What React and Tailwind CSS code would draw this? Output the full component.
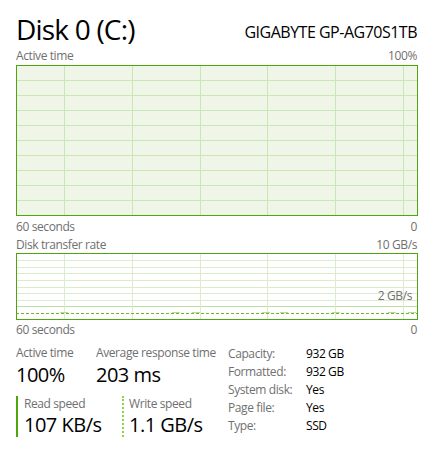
import React from 'react';

const font = { fontFamily: '"Open Sans", "Noto Sans", sans-serif' };

const vLines = [48, 116, 184, 251, 319, 387];

function ActiveChart() {
  const hLines = [15, 30, 45, 60, 75, 90, 105, 120, 135];
  return (
    <svg width="402" height="151" className="block">
      <rect x="0" y="0" width="402" height="151" fill="#eff6e8" />
      {hLines.map((y) => (
        <line key={y} x1="0" x2="402" y1={y + 0.5} y2={y + 0.5} stroke="#c9e6b3" strokeWidth="1" />
      ))}
      {vLines.map((x) => (
        <line key={x} x1={x + 0.5} x2={x + 0.5} y1="0" y2="151" stroke="#c9e6b3" strokeWidth="1" />
      ))}
      <rect x="0.5" y="0.5" width="401" height="150" fill="none" stroke="#4da60c" strokeWidth="1" />
    </svg>
  );
}

function TransferChart() {
  const hLines = [7, 14, 20, 27, 34, 40, 47];
  const bumps = [44, 156, 176, 246, 264, 316, 372, 392];
  return (
    <svg width="402" height="67" className="block">
      <rect x="0" y="0" width="402" height="67" fill="#ffffff" />
      {hLines.map((y) => (
        <line key={y} x1="0" x2="402" y1={y + 0.5} y2={y + 0.5} stroke="#d9edcb" strokeWidth="1" />
      ))}
      <line x1="0" x2="402" y1="53.5" y2="53.5" stroke="#bcdca6" strokeWidth="1" />
      {vLines.map((x) => (
        <line key={x} x1={x + 0.5} x2={x + 0.5} y1="0" y2="67" stroke="#d9edcb" strokeWidth="1" />
      ))}
      <line x1="0" x2="402" y1="60.5" y2="60.5" stroke="#6db62c" strokeWidth="1" strokeDasharray="3 2" />
      {bumps.map((x) => (
        <line key={x} x1={x} x2={x + 8} y1="59.5" y2="59.5" stroke="#b4e08a" strokeWidth="1" />
      ))}
      <rect x="0.5" y="0.5" width="401" height="66" fill="none" stroke="#4da60c" strokeWidth="1" />
    </svg>
  );
}

const specs = [
  ['Capacity:', '932 GB'],
  ['Formatted:', '932 GB'],
  ['System disk:', 'Yes'],
  ['Page file:', 'Yes'],
  ['Type:', 'SSD'],
];

export default function App() {
  return (
    <div className="w-[433px] h-[451px] bg-white px-4 text-black overflow-hidden tracking-[-0.4px]" style={font}>
      {/* Header */}
      <div className="flex items-end justify-between h-[47px] pt-[6px]">
        <div className="text-[28px] leading-[36px] tracking-[-0.8px]">Disk 0 (C:)</div>
        <div className="text-[16px] leading-[22px] mb-[4px] tracking-[-0.5px]">GIGABYTE GP-AG70S1TB</div>
      </div>

      {/* Active time */}
      <div className="flex justify-between text-[12px] leading-[18px] text-[#707070] h-[18px]">
        <span>Active time</span>
        <span>100%</span>
      </div>
      <ActiveChart />
      <div className="flex justify-between text-[12px] leading-[18px] text-[#707070] mt-[2px]">
        <span>60 seconds</span>
        <span>0</span>
      </div>

      {/* Transfer rate */}
      <div className="flex justify-between text-[12px] leading-[18px] text-[#707070] h-[17px]">
        <span>Disk transfer rate</span>
        <span>10 GB/s</span>
      </div>
      <div className="relative">
        <TransferChart />
        <span className="absolute right-[5px] top-[36px] text-[12px] leading-[14px] text-[#707070]">2 GB/s</span>
      </div>
      <div className="flex justify-between text-[12px] leading-[18px] text-[#707070] mt-[1px]">
        <span>60 seconds</span>
        <span>0</span>
      </div>

      {/* Stats */}
      <div className="flex mt-[6px]">
        <div className="w-[212px]">
          <div className="flex">
            <div className="w-[80px]">
              <div className="text-[12px] leading-[16px] text-[#707070]">Active time</div>
              <div className="text-[20px] leading-[28px] tracking-[-0.5px]">100%</div>
            </div>
            <div>
              <div className="text-[12px] leading-[16px] text-[#707070]">Average response time</div>
              <div className="text-[20px] leading-[28px] tracking-[-0.5px]">203 ms</div>
            </div>
          </div>
          <div className="flex mt-[7px]">
            <div className="w-[106px] border-l-2 border-[#4da60c] pl-[6px] h-[41px]">
              <div className="text-[12px] leading-[16px] text-[#707070]">Read speed</div>
              <div className="text-[20px] leading-[26px] tracking-[-0.5px]">107 KB/s</div>
            </div>
            <div className="border-l-2 border-dotted border-[#8fd14f] pl-[5px] h-[41px]">
              <div className="text-[12px] leading-[16px] text-[#707070]">Write speed</div>
              <div className="text-[20px] leading-[26px] tracking-[-0.5px]">1.1 GB/s</div>
            </div>
          </div>
        </div>
        <div className="flex flex-col">
          {specs.map(([k, v]) => (
            <div key={k} className="flex text-[12px] leading-[18px]">
              <span className="w-[78px] text-[#707070]">{k}</span>
              <span>{v}</span>
            </div>
          ))}
        </div>
      </div>
    </div>
  );
}
